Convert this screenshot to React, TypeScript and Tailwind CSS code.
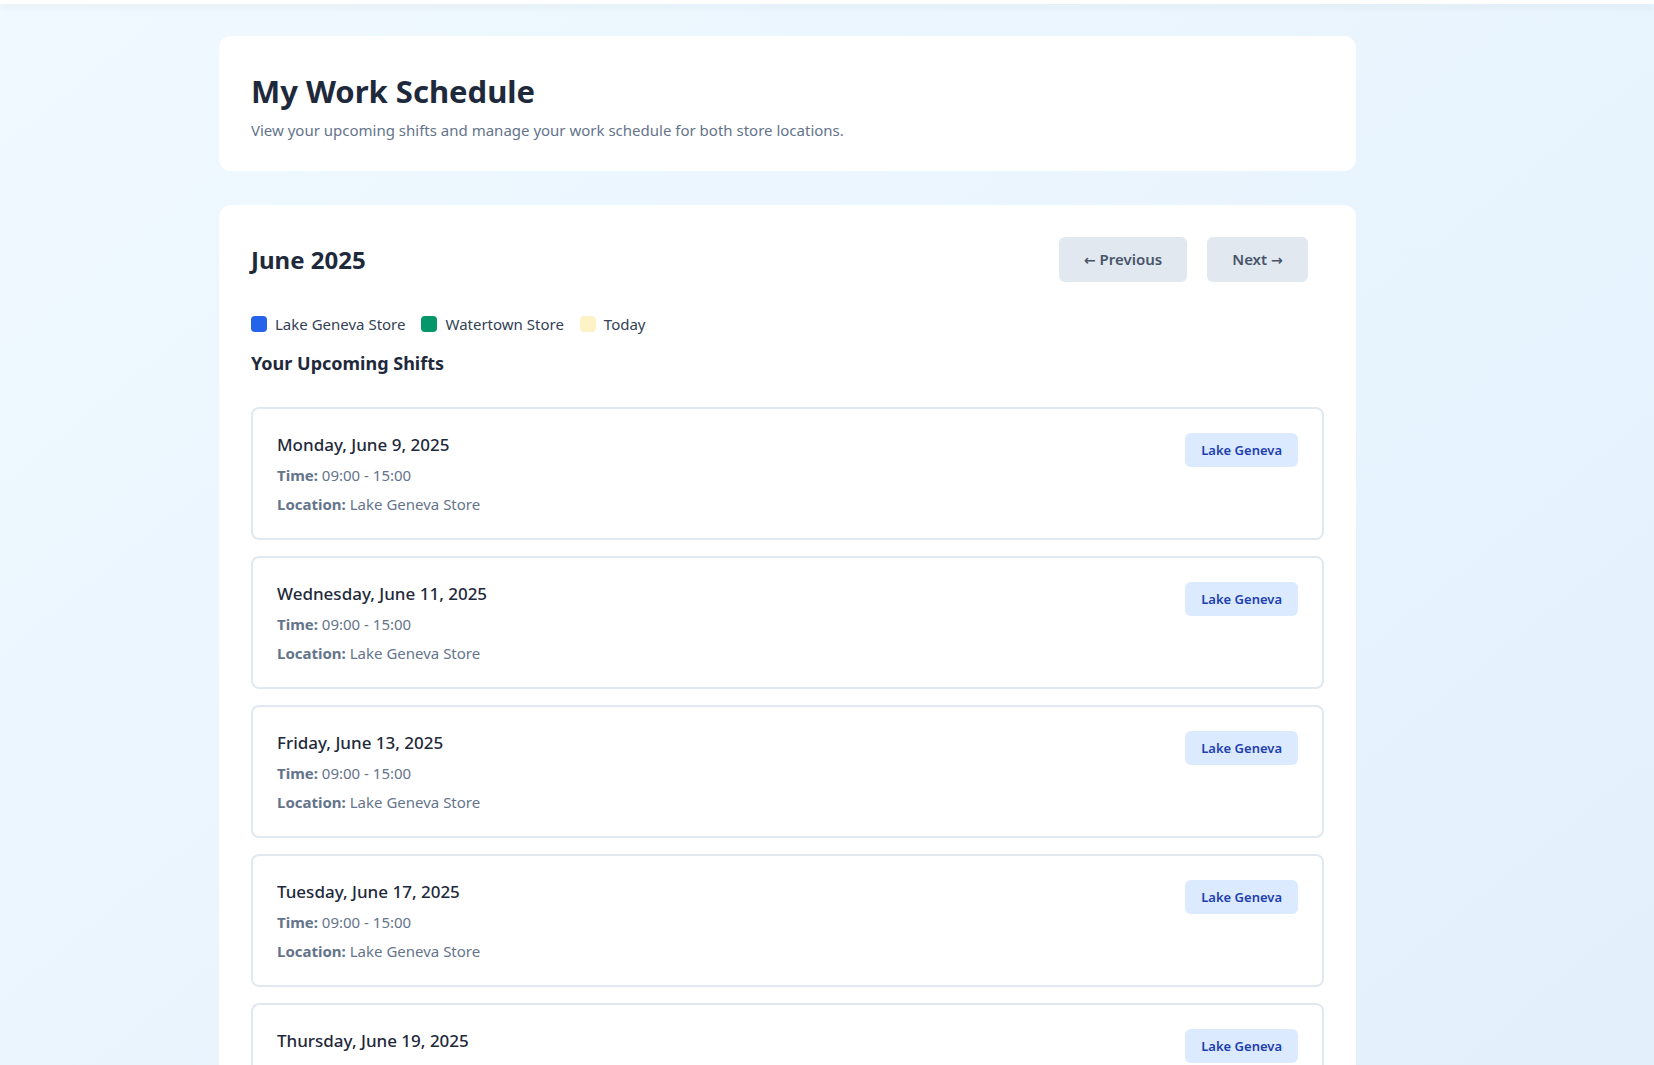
import React from "react";

interface Shift {
  date: string;
  time: string;
  location: string;
  store: "lake" | "water";
}

const shifts: Shift[] = [
  { date: "Monday, June 9, 2025", time: "09:00 - 15:00", location: "Lake Geneva Store", store: "lake" },
  { date: "Wednesday, June 11, 2025", time: "09:00 - 15:00", location: "Lake Geneva Store", store: "lake" },
  { date: "Friday, June 13, 2025", time: "09:00 - 15:00", location: "Lake Geneva Store", store: "lake" },
  { date: "Tuesday, June 17, 2025", time: "09:00 - 15:00", location: "Lake Geneva Store", store: "lake" },
  { date: "Thursday, June 19, 2025", time: "09:00 - 15:00", location: "Lake Geneva Store", store: "lake" },
  { date: "Monday, June 23, 2025", time: "09:00 - 15:00", location: "Lake Geneva Store", store: "lake" },
];

const ShiftCard: React.FC<{ shift: Shift }> = ({ shift }) => (
  <div className="flex justify-between items-start border-2 border-[#e2e8f0] rounded-lg p-6 mb-4">
    <div>
      <h3 className="text-[17px] leading-6 font-medium text-[#1e293b] mb-2">{shift.date}</h3>
      <p className="text-[15px] leading-5 text-[#64748b] mb-[9px]">
        <span className="font-bold">Time:</span> {shift.time}
      </p>
      <p className="text-[15px] leading-5 text-[#64748b]">
        <span className="font-bold">Location:</span> {shift.location}
      </p>
    </div>
    <span className="px-4 py-2 rounded-md bg-[#dbeafe] text-[#1e40af] text-[13px] leading-[18px] font-semibold">
      {shift.store === "lake" ? "Lake Geneva" : "Watertown"}
    </span>
  </div>
);

export default function App() {
  return (
    <div
      className="min-h-screen bg-gradient-to-br from-[#f0f9ff] to-[#e1effc]"
      style={{ fontFamily: '"Noto Sans", "Open Sans", sans-serif' }}
    >
      <div className="h-1 bg-white shadow-md" />
      <main className="w-[1137px] ml-[219px] pt-8 pb-8">
        <section className="bg-white rounded-xl px-8 pt-[35px] pb-[31px] mb-[34px]">
          <h1 className="text-[31px] leading-[40px] font-bold text-[#1e293b] mb-[9px]">My Work Schedule</h1>
          <p className="text-[15px] leading-5 text-[#64748b]">
            View your upcoming shifts and manage your work schedule for both store locations.
          </p>
        </section>

        <section className="bg-white rounded-xl p-8">
          <div className="flex justify-between items-center mb-8 mr-4">
            <h2 className="text-[24px] leading-8 font-bold text-[#1e293b]">June 2025</h2>
            <div className="flex gap-5">
              <button className="w-[128px] h-[45px] rounded-md bg-[#e2e8f0] text-[#475569] text-[15px] font-semibold">
                <span style={{ fontFamily: '"DejaVu Sans", sans-serif' }} className="text-[14px]">←</span> Previous
              </button>
              <button className="w-[101px] h-[45px] rounded-md bg-[#e2e8f0] text-[#475569] text-[15px] font-semibold">
                Next <span style={{ fontFamily: '"DejaVu Sans", sans-serif' }} className="text-[14px]">→</span>
              </button>
            </div>
          </div>

          <div className="flex items-center gap-4 mb-[15px] text-[15px] leading-5 text-[#334155]">
            <div className="flex items-center gap-2">
              <span className="w-4 h-4 rounded bg-[#2563eb]" />
              Lake Geneva Store
            </div>
            <div className="flex items-center gap-2">
              <span className="w-4 h-4 rounded bg-[#059669]" />
              Watertown Store
            </div>
            <div className="flex items-center gap-2">
              <span className="w-4 h-4 rounded bg-[#fef3c7]" />
              Today
            </div>
          </div>

          <h3 className="text-[18px] leading-7 font-bold text-[#1e293b] mb-[30px]">Your Upcoming Shifts</h3>

          <div>
            {shifts.map((s) => (
              <ShiftCard key={s.date} shift={s} />
            ))}
          </div>
        </section>
      </main>
    </div>
  );
}
